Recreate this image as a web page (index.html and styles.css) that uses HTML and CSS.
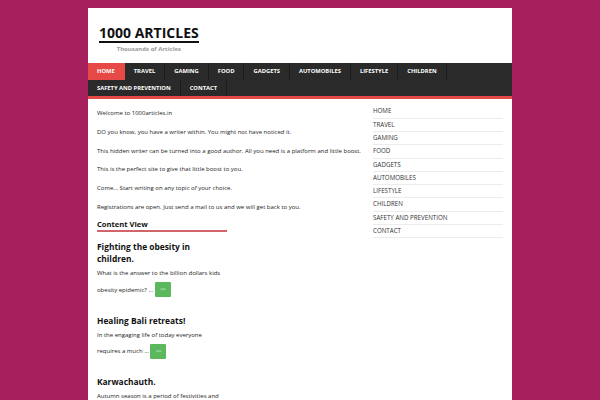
FILE: index.html
```html
<!DOCTYPE html>
<html>
<head>
<meta charset="utf-8">
<link rel="stylesheet" href="styles.css">
</head>
<body>
<div class="wrap">
  <header class="header">
    <div class="brand">
      <div class="title">1000 ARTICLES</div>
      <div class="tagline">Thousands of Articles</div>
    </div>
  </header>
  <nav class="nav">
    <a class="item active">HOME</a>
    <a class="item">TRAVEL</a>
    <a class="item">GAMING</a>
    <a class="item">FOOD</a>
    <a class="item">GADGETS</a>
    <a class="item">AUTOMOBILES</a>
    <a class="item">LIFESTYLE</a>
    <a class="item">CHILDREN</a>
    <a class="item">SAFETY AND PREVENTION</a>
    <a class="item">CONTACT</a>
  </nav>
  <div class="main">
    <div class="content">
      <p>Welcome to 1000articles.in</p>
      <p>DO you know, you have a writer within. You might not have noticed it.</p>
      <p>This hidden writer can be turned into a good author. All you need is a platform and little boost.</p>
      <p>This is the perfect site to give that little boost to you.</p>
      <p>Come... Start writing on any topic of your choice.</p>
      <p>Registrations are open. Just send a mail to us and we will get back to you.</p>
      <div class="posts">
        <h3 class="section">Content View</h3>
        <div class="post">
          <h2 class="post-title">Fighting the obesity in children.</h2>
          <div class="excerpt">What is the answer to the billion dollars kids<br>obesity epidemic? ... <span class="more">&gt;&gt;</span></div>
        </div>
        <div class="post">
          <h2 class="post-title">Healing Bali retreats!</h2>
          <div class="excerpt">In the engaging life of today everyone<br>requires a much ... <span class="more">&gt;&gt;</span></div>
        </div>
        <div class="post">
          <h2 class="post-title">Karwachauth.</h2>
          <div class="excerpt">Autumn season is a period of festivities and</div>
        </div>
      </div>
    </div>
    <aside class="sidebar">
      <ul class="menu">
        <li>HOME</li>
        <li>TRAVEL</li>
        <li>GAMING</li>
        <li>FOOD</li>
        <li>GADGETS</li>
        <li>AUTOMOBILES</li>
        <li>LIFESTYLE</li>
        <li>CHILDREN</li>
        <li>SAFETY AND PREVENTION</li>
        <li>CONTACT</li>
      </ul>
    </aside>
  </div>
</div>
</body>
</html>
```

FILE: styles.css
```css
html, body { height: 100%; }
body {
  margin: 8px 0 0;
  background: #a5205c;
  font-family: "Open Sans", "DejaVu Sans", sans-serif;
  color: #222;
  overflow: hidden;
}
.wrap {
  width: 424px;
  margin: 0 auto;
  background: #fff;
  min-height: 400px;
}
.header {
  height: 55px;
  padding: 13px 0 0 11px;
  box-sizing: border-box;
}
.brand { display: inline-flex; flex-direction: column; align-items: center; }
.title {
  font-size: 14px;
  font-weight: 700;
  line-height: 16px;
  color: #111;
  border-bottom: 2px solid #111;
}
.tagline {
  margin-top: 1px;
  font-size: 6px;
  font-weight: 700;
  color: #999;
  line-height: 10px;
}
.nav {
  display: flex;
  flex-wrap: wrap;
  background: #2a2a2a;
  border-bottom: 3px solid #e64946;
}
.nav .item {
  font-size: 5.8px;
  font-weight: 700;
  color: #fff;
  line-height: 16.6px;
  padding: 0 9px;
  border-right: 1px solid #1c1c1c;
}
.nav .item.active { background: #e64946; border-right-color: #e64946; }
.main {
  display: grid;
  grid-template-columns: 1fr 130px;
  column-gap: 9px;
  padding: 6px 9px 0;
}
.content { padding-top: 2px; }
.content p {
  margin: 0 0 6.7px;
  font-size: 6px;
  line-height: 12px;
  color: #222;
}
.posts { width: 130px; }
.section {
  margin: 0;
  font-size: 7.6px;
  font-weight: 700;
  line-height: 10px;
  padding-bottom: 1px;
  border-bottom: 2px solid #d0656a;
  color: #111;
}
.post { margin-top: 8.7px; margin-bottom: 16.5px; }
.post + .post { margin-top: 0; }
.post-title {
  margin: 0;
  font-size: 8.4px;
  font-weight: 700;
  line-height: 12px;
  color: #111;
}
.excerpt {
  font-size: 6px;
  line-height: 16.5px;
  color: #222;
}
.more {
  display: inline-block;
  width: 16px;
  height: 15px;
  line-height: 15px;
  text-align: center;
  vertical-align: middle;
  background: #5cb85c;
  color: #fff;
  font-size: 4.5px;
  border-radius: 1px;
}
.menu { list-style: none; margin: 0; padding: 0; }
.menu li {
  font-size: 6.2px;
  line-height: 12.33px;
  border-bottom: 1px solid #ececec;
  color: #333;
}
```
